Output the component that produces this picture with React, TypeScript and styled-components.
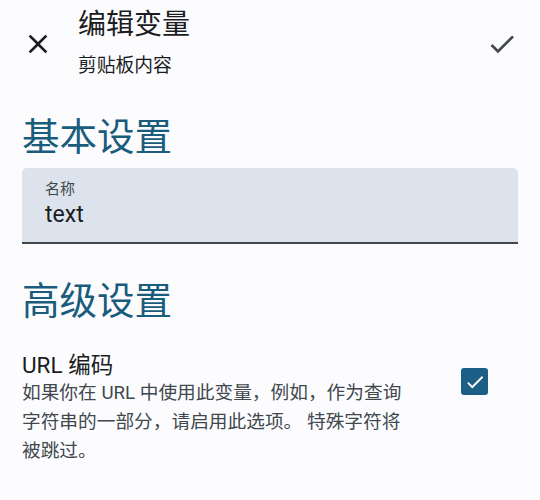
import React from 'react';
import styled, { createGlobalStyle } from 'styled-components';

const GlobalStyle = createGlobalStyle`
  body {
    margin: 0;
    background: #fcfcff;
    font-family: Roboto, "Noto Sans CJK SC", sans-serif;
    color: #1a1c1e;
  }
`;

const Page = styled.div`
  width: 540px;
  height: 500px;
  overflow: hidden;
  background: #fcfcff;
`;

const TopBar = styled.header`
  display: flex;
  align-items: center;
  padding: 5px 22px 0 22px;
  gap: 24px;
`;

const IconBtn = styled.button`
  display: flex;
  align-items: center;
  justify-content: center;
  width: 32px;
  height: 32px;
  margin-top: 3px;
  padding: 0;
  border: none;
  background: none;
  color: ${(p) => p.color || '#1a1c1e'};
  svg {
    width: 32px;
    height: 32px;
    fill: currentColor;
  }
`;

const TitleBlock = styled.div`
  flex: 1;
  display: flex;
  flex-direction: column;
`;

const Title = styled.div`
  font-size: 28px;
  line-height: 40px;
`;

const Subtitle = styled.div`
  font-size: 18.8px;
  line-height: 26px;
  margin-top: 8px;
  color: #1a1c1e;
`;

const Content = styled.main`
  padding: 0 22px;
`;

const Gap = styled.div<{ h: number }>`
  height: ${(p) => p.h}px;
`;

const SectionTitle = styled.h2`
  margin: 0;
  font-weight: 400;
  font-size: 37.5px;
  line-height: 50px;
  color: #195c7b;
`;

const Field = styled.div`
  background: #dce3ec;
  border-radius: 5px 5px 0 0;
  border-bottom: 2px solid #41484d;
  padding: 11px 23px 11px;
  display: flex;
  flex-direction: column;
`;

const FieldLabel = styled.label`
  font-size: 15px;
  line-height: 20px;
  color: #41484d;
`;

const FieldValue = styled.div`
  font-size: 23px;
  line-height: 32px;
  color: #1a1c1e;
`;

const OptionRow = styled.div`
  display: flex;
  align-items: flex-start;
  justify-content: space-between;
  padding-right: 30px;
`;

const OptionText = styled.div`
  flex: 1;
`;

const OptionTitle = styled.div`
  font-size: 22.5px;
  line-height: 28px;
  color: #1a1c1e;
`;

const OptionDesc = styled.div`
  font-size: 18.7px;
  line-height: 29px;
  color: #41484d;
  white-space: nowrap;
`;

const Check = styled.div`
  width: 27px;
  height: 27px;
  margin-top: 17px;
  border-radius: 3px;
  background: #1b5f86;
  display: flex;
  align-items: center;
  justify-content: center;
  svg {
    width: 22px;
    height: 22px;
    fill: #fff;
  }
`;

export default function App() {
  return (
    <Page>
      <GlobalStyle />
      <TopBar>
        <IconBtn aria-label="关闭">
          <svg viewBox="0 0 24 24">
            <path d="M19 6.41L17.59 5 12 10.59 6.41 5 5 6.41 10.59 12 5 17.59 6.41 19 12 13.41 17.59 19 19 17.59 13.41 12z" />
          </svg>
        </IconBtn>
        <TitleBlock>
          <Title>编辑变量</Title>
          <Subtitle>剪贴板内容</Subtitle>
        </TitleBlock>
        <IconBtn aria-label="保存" color="#41484d">
          <svg viewBox="0 0 24 24">
            <path d="M9 16.17L4.83 12l-1.41 1.41L9 19 21 7l-1.41-1.41z" />
          </svg>
        </IconBtn>
      </TopBar>
      <Content>
        <Gap h={33} />
        <SectionTitle>基本设置</SectionTitle>
        <Gap h={6} />
        <Field>
          <FieldLabel>名称</FieldLabel>
          <FieldValue>text</FieldValue>
        </Field>
        <Gap h={32} />
        <SectionTitle>高级设置</SectionTitle>
        <Gap h={25} />
        <OptionRow>
          <OptionText>
            <OptionTitle>URL 编码</OptionTitle>
            <OptionDesc>
              如果你在 URL 中使用此变量，例如，作为查询
              <br />
              字符串的一部分，请启用此选项。 特殊字符将
              <br />
              被跳过。
            </OptionDesc>
          </OptionText>
          <Check>
            <svg viewBox="0 0 24 24">
              <path d="M9 16.17L4.83 12l-1.41 1.41L9 19 21 7l-1.41-1.41z" />
            </svg>
          </Check>
        </OptionRow>
      </Content>
    </Page>
  );
}
